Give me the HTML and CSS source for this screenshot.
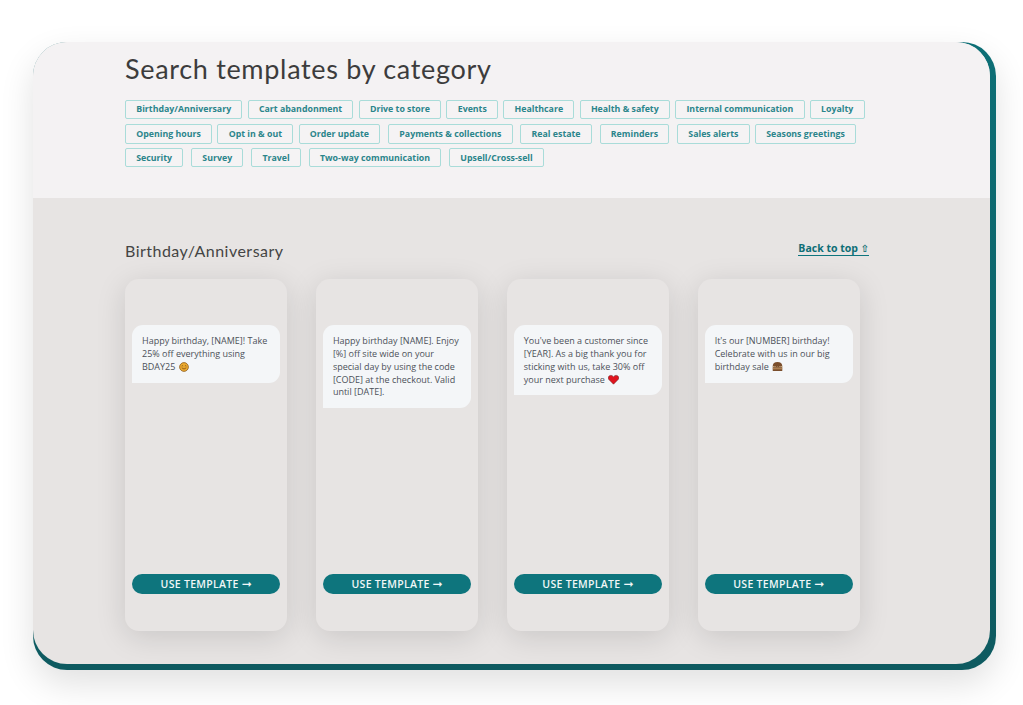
FILE: index.html
```html
<!DOCTYPE html>
<html lang="en">
<head>
<meta charset="utf-8">
<title>Search templates by category</title>
<link rel="stylesheet" href="styles.css">
</head>
<body>
<main class="frame">
  <div class="screen">
    <section class="top">
      <h1 class="title">Search templates by category</h1>
      <div class="tags">
        <ul class="tag-row">
          <li class="tag">Birthday/Anniversary</li>
          <li class="tag">Cart abandonment</li>
          <li class="tag">Drive to store</li>
          <li class="tag">Events</li>
          <li class="tag">Healthcare</li>
          <li class="tag">Health &amp; safety</li>
          <li class="tag">Internal communication</li>
          <li class="tag">Loyalty</li>
        </ul>
        <ul class="tag-row tag-row-tall">
          <li class="tag">Opening hours</li>
          <li class="tag">Opt in &amp; out</li>
          <li class="tag tag-spaced">Order update</li>
          <li class="tag tag-spaced">Payments &amp; collections</li>
          <li class="tag tag-spaced">Real estate</li>
          <li class="tag tag-spaced">Reminders</li>
          <li class="tag">Sales alerts</li>
          <li class="tag">Seasons greetings</li>
        </ul>
        <ul class="tag-row">
          <li class="tag tag-spaced">Security</li>
          <li class="tag tag-spaced">Survey</li>
          <li class="tag tag-spaced">Travel</li>
          <li class="tag tag-spaced">Two-way communication</li>
          <li class="tag">Upsell/Cross-sell</li>
        </ul>
      </div>
    </section>
    <section class="bottom">
      <header class="section-head">
        <h2 class="section-title">Birthday/Anniversary</h2>
        <a class="back" href="#">Back to top <span class="back-icon">⇧</span></a>
      </header>
      <div class="cards">
        <article class="card">
          <p class="bubble">Happy birthday, [NAME]! Take 25% off everything using BDAY25 <svg class="emoji" viewBox="0 0 12 12"><circle cx="6" cy="6" r="5.300" fill="#eba92f" stroke="#8a5a1c" stroke-width="0.9"/><path d="M3.200 4.900q.9-.9 1.700 0M7.100 4.900q.9-.9 1.700 0" fill="none" stroke="#5a3a14" stroke-width="0.8"/><path d="M3.300 7q2.700 2.800 5.400 0" fill="none" stroke="#7a4a18" stroke-width="0.9"/></svg></p>
          <a class="use" href="#">USE TEMPLATE <span class="arrow">➞</span></a>
        </article>
        <article class="card">
          <p class="bubble">Happy birthday [NAME]. Enjoy [%] off site wide on your special day by using the code [CODE] at the checkout. Valid until [DATE].</p>
          <a class="use" href="#">USE TEMPLATE <span class="arrow">➞</span></a>
        </article>
        <article class="card">
          <p class="bubble">You've been a customer since [YEAR]. As a big thank you for sticking with us, take 30% off your next purchase <svg class="emoji emoji-wide" viewBox="0 0 12 11"><path d="M6 10.600 1 5.600C-.4 4 .4 1 3 1c1.300 0 2.400.7 3 1.700C6.600 1.700 7.700 1 9 1c2.600 0 3.400 3 2 4.600z" fill="#e0141e" stroke="#6a1a1e" stroke-width="0.6"/></svg></p>
          <a class="use" href="#">USE TEMPLATE <span class="arrow">➞</span></a>
        </article>
        <article class="card">
          <p class="bubble">It's our [NUMBER] birthday! Celebrate with us in our big birthday sale <svg class="emoji emoji-wide" viewBox="0 0 12 12"><path d="M.8 5.500Q1 1.500 6 1.200q5 .3 5.200 4.300v5.300H.8z" fill="#7a4e2c"/><path d="M.8 5.300q1.300 1.500 2.600.4 1.200 1.400 2.600.2 1.300 1.200 2.600-.2 1.300 1.100 2.600-.4v1.400H.8z" fill="#e0c79c"/><rect x=".8" y="8" width="10.400" height="1" fill="#c89a66"/></svg></p>
          <a class="use" href="#">USE TEMPLATE <span class="arrow">➞</span></a>
        </article>
      </div>
    </section>
  </div>
</main>
</body>
</html>
```
FILE: styles.css
```css
* { box-sizing: border-box; }
html, body { margin: 0; height: 100%; background: #fff; overflow: hidden; }
body {
  padding: 42px 27px 0 33px;
  font-family: "Open Sans", "Liberation Sans", sans-serif;
}
.frame {
  height: 628px;
  padding: 0 6px 6px 0;
  background: linear-gradient(180deg, #0d6f76, #0e5a60);
  border-radius: 34px;
  box-shadow: 0 14px 34px rgba(0, 0, 0, .12);
}
.screen {
  height: 100%;
  display: flex;
  flex-direction: column;
  overflow: hidden;
  background: #e7e4e3;
  border-radius: 34px;
}
.top {
  height: 156px;
  padding: 9px 0 0 92px;
  background: #f4f2f3;
}
.title {
  margin: 0 0 13px;
  font: 400 27px/36px Lato, "Open Sans", sans-serif;
  letter-spacing: .68px;
  color: #3c3c3c;
}
.tags {
  display: flex;
  flex-direction: column;
  gap: 4.800px;
}
.tag-row {
  height: 18.800px;
  margin: 0;
  padding: 0;
  list-style: none;
  display: flex;
  gap: 5.250px;
}
.tag-row-tall { height: 20px; }
.tag {
  padding: 0 10.250px;
  display: flex;
  align-items: center;
  font-size: 8.800px;
  font-weight: 700;
  color: #2b858b;
  background: #f5f3f4;
  border: 1px solid #a9dcd9;
  border-radius: 2px;
}
.tag-spaced { margin-right: 2.500px; }
.bottom {
  flex: 1;
  padding: 42px 121px 0 92px;
}
.section-head {
  display: flex;
  justify-content: space-between;
  align-items: flex-start;
  height: 39px;
}
.section-title {
  margin: 0;
  font: 400 16px/22px Lato, "Open Sans", sans-serif;
  letter-spacing: .48px;
  color: #444;
}
.back {
  margin: 2px 0 0;
  font-size: 10.500px;
  font-weight: 700;
  line-height: 13px;
  color: #0e6e76;
  text-decoration: none;
  border-bottom: 1px solid #0e757d;
}
.back-icon { font-family: "DejaVu Sans", sans-serif; font-weight: 700; font-size: 10px; }
.cards {
  width: 735px;
  display: flex;
  gap: 28.500px;
}
.card {
  flex: 1;
  height: 352px;
  padding: 46px 7px 37px;
  display: flex;
  flex-direction: column;
  justify-content: space-between;
  background: #e7e4e3;
  border-radius: 14px;
  box-shadow: 0 6px 30px rgba(0, 0, 0, .13);
}
.bubble {
  margin: 0;
  padding: 10.300px 10px 9px;
  font-size: 9px;
  line-height: 12.750px;
  color: #4c5158;
  background: #f4f6f8;
  border-radius: 11px 11px 11px 0;
}
.emoji {
  width: 10px;
  height: 10px;
  margin-left: 1px;
  vertical-align: -2px;
}
.emoji-wide { width: 11px; height: 11px; }
.use {
  height: 20.500px;
  display: flex;
  align-items: center;
  justify-content: center;
  gap: 3px;
  font-size: 10.500px;
  font-weight: 600;
  letter-spacing: .3px;
  color: #f1f7f7;
  text-decoration: none;
  background: #0e757d;
  border-radius: 11px;
}
.arrow { font-family: "DejaVu Sans", sans-serif; font-size: 12px; line-height: 1; letter-spacing: 0; }
```
